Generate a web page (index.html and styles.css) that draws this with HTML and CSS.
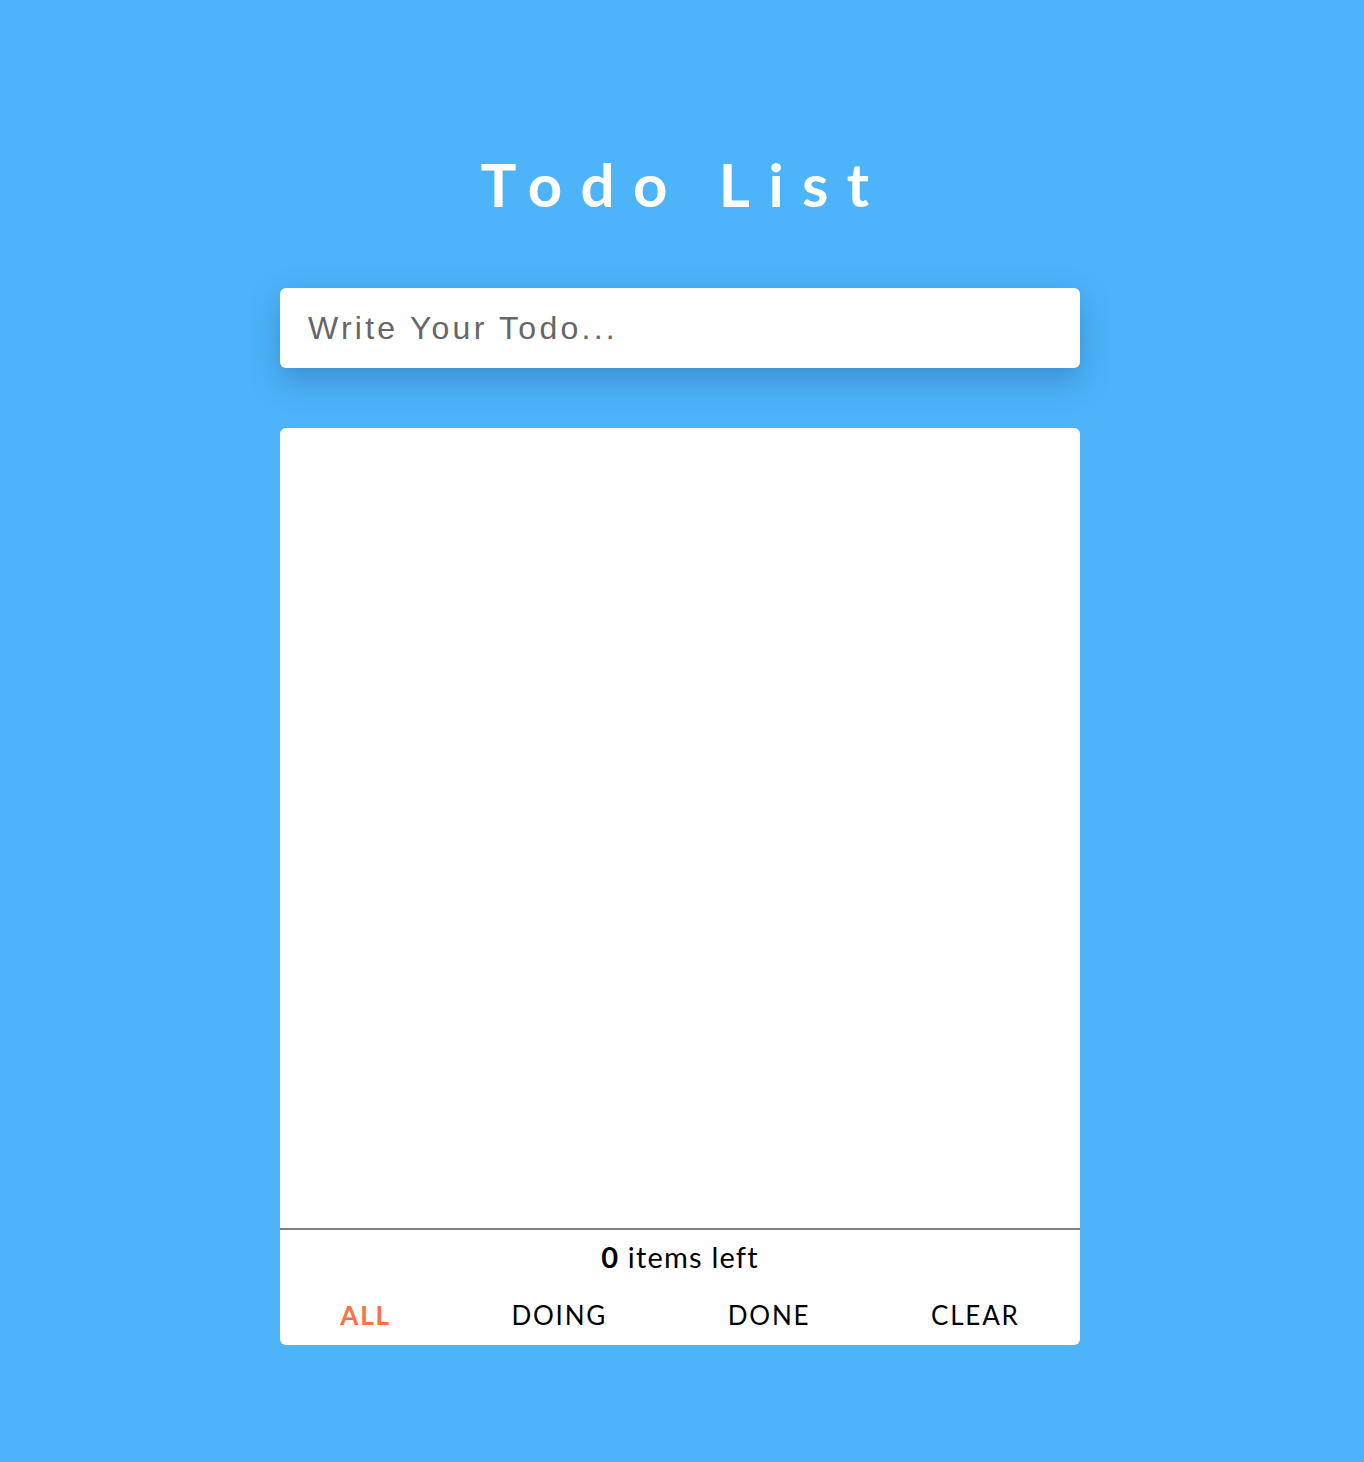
FILE: index.html
```html
<!DOCTYPE html>
<html lang="en">
<head>
<meta charset="utf-8">
<title>Todo List</title>
<link rel="stylesheet" href="styles.css">
</head>
<body>
<main class="app">
  <h1 class="title">Todo List</h1>
  <input class="todo-input" type="text" placeholder="Write Your Todo...">
  <section class="card">
    <ul class="todo-list"></ul>
    <footer class="footer">
      <div class="count"><strong>0</strong> items left</div>
      <nav class="filters">
        <button class="filter active">ALL</button>
        <button class="filter">DOING</button>
        <button class="filter">DONE</button>
        <button class="filter">CLEAR</button>
      </nav>
    </footer>
  </section>
</main>
</body>
</html>
```
FILE: styles.css
```css
html, body {
  margin: 0;
  padding: 0;
}
body {
  background: #4db4f9;
  min-height: 1462px;
  padding-right: 4px;
  font-family: "Lato", "Noto Sans", sans-serif;
}
.app {
  width: 800px;
  margin: 0 auto;
  padding-top: 148px;
  display: flex;
  flex-direction: column;
}
.title {
  margin: 0;
  text-align: center;
  color: #fff;
  font-family: "Lato", sans-serif;
  font-weight: 700;
  font-size: 60px;
  line-height: 72px;
  letter-spacing: 18.4px;
  padding-left: 8px;
}
.todo-input {
  margin-top: 68px;
  box-sizing: border-box;
  width: 800px;
  height: 80px;
  border: none;
  border-radius: 6px;
  padding: 0 28px;
  font-family: "Liberation Sans", Arial, sans-serif;
  font-size: 32px;
  letter-spacing: 3.25px;
  color: #333;
  background: #fff;
  box-shadow: 0 12px 32px rgba(0, 35, 85, 0.26);
  outline: none;
}
.todo-input::placeholder {
  color: #666;
}
.card {
  margin-top: 60px;
  background: #fff;
  border-radius: 6px;
  height: 917px;
  display: flex;
  flex-direction: column;
  overflow: hidden;
}
.todo-list {
  list-style: none;
  margin: 0;
  padding: 0;
  height: 800px;
  border-bottom: 2px solid #808080;
}
.footer {
  flex: 1;
  display: flex;
  flex-direction: column;
}
.count {
  text-align: center;
  font-size: 29px;
  letter-spacing: 1.2px;
  color: #000;
  line-height: 34px;
  margin-top: 10px;
}
.count strong {
  font-weight: 700;
}
.filters {
  display: flex;
  justify-content: space-around;
  margin-top: 25px;
}
.filter {
  background: none;
  border: none;
  padding: 0;
  font-family: "Lato", sans-serif;
  font-size: 26px;
  letter-spacing: 1.8px;
  line-height: 32px;
  color: #000;
  cursor: pointer;
}
.filter.active {
  color: #ff7043;
  font-weight: 700;
}
```
